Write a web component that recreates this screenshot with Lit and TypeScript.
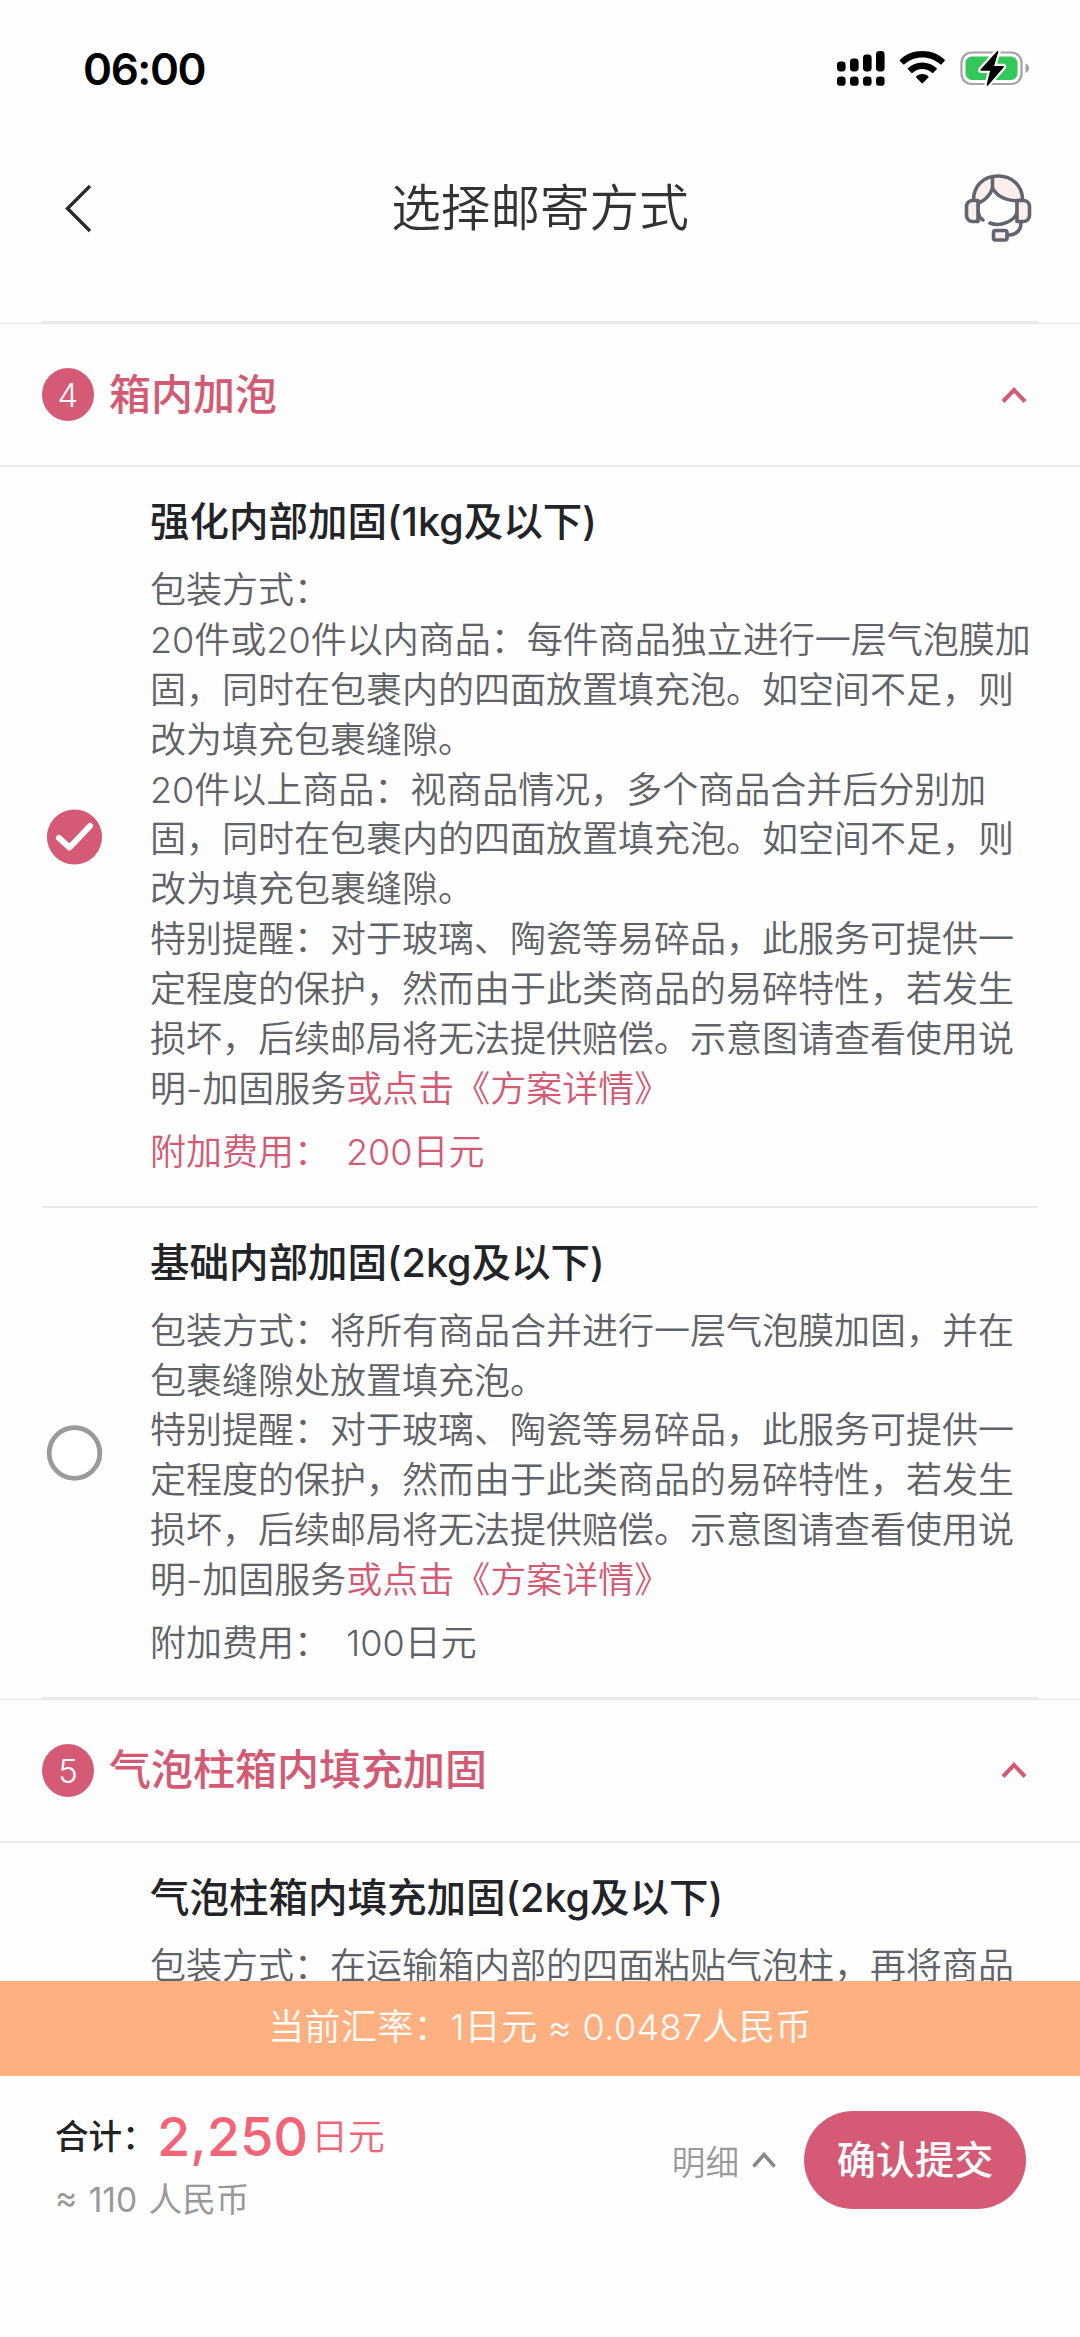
import { LitElement, html, css, svg, nothing } from "lit";
import { customElement, property, state } from "lit/decorators.js";

interface Option {
  id: string;
  title: string;
  lines: string[];
  link?: string;
  fee?: string;
}

interface Section {
  step: number;
  title: string;
  options: Option[];
}

const NOTICE = [
  "特别提醒：对于玻璃、陶瓷等易碎品，此服务可提供一",
  "定程度的保护，然而由于此类商品的易碎特性，若发生",
  "损坏，后续邮局将无法提供赔偿。示意图请查看使用说",
  "明-加固服务",
];

const SECTIONS: Section[] = [
  {
    step: 4,
    title: "箱内加泡",
    options: [
      {
        id: "strong",
        title: "强化内部加固(1kg及以下)",
        lines: [
          "包装方式：",
          "20件或20件以内商品：每件商品独立进行一层气泡膜加",
          "固，同时在包裹内的四面放置填充泡。如空间不足，则",
          "改为填充包裹缝隙。",
          "20件以上商品：视商品情况，多个商品合并后分别加",
          "固，同时在包裹内的四面放置填充泡。如空间不足，则",
          "改为填充包裹缝隙。",
          ...NOTICE,
        ],
        link: "或点击《方案详情》",
        fee: "200日元",
      },
      {
        id: "basic",
        title: "基础内部加固(2kg及以下)",
        lines: [
          "包装方式：将所有商品合并进行一层气泡膜加固，并在",
          "包裹缝隙处放置填充泡。",
          ...NOTICE,
        ],
        link: "或点击《方案详情》",
        fee: "100日元",
      },
    ],
  },
  {
    step: 5,
    title: "气泡柱箱内填充加固",
    options: [
      {
        id: "column",
        title: "气泡柱箱内填充加固(2kg及以下)",
        lines: ["包装方式：在运输箱内部的四面粘贴气泡柱，再将商品"],
      },
    ],
  },
];

@customElement("status-bar")
export class StatusBar extends LitElement {
  static styles = css`
    :host {
      display: flex;
      align-items: center;
      justify-content: space-between;
      height: 102px;
      padding: 36px 49px 0 83px;
      box-sizing: border-box;
    }
    .time {
      font-size: 44px;
      line-height: 66px;
      font-weight: 600;
      letter-spacing: -1.400px;
      color: #000;
    }
    .icons {
      display: block;
    }
  `;

  render() {
    const bars = [
      { x: 0, top: 10.5 },
      { x: 13, top: 7.5 },
      { x: 26, top: 3.5 },
      { x: 39, top: 0 },
    ];
    return html`
      <span class="time">06:00</span>
      <svg class="icons" width="194" height="36" viewBox="0 0 194 36">
        ${bars.map(
          (b) => svg`
            <rect x=${b.x} y=${b.top} width="8.6" height=${20.5 - b.top} rx="3.4" />
            <rect x=${b.x} y="25.5" width="8.6" height="9.3" rx="3.4" />`
        )}
        <path
          d="M85.3 0C94.2 0 102 3.4 107.6 8.7a1 1 0 0 1 0 1.4l-3.1 3.1a1 1 0 0 1-1.4 0C98.400 8.900 92.200 6.400 85.300 6.400S72.200 8.900 67.500 13.200a1 1 0 0 1-1.4 0L63 10.100a1 1 0 0 1 0-1.400C68.600 3.400 76.400 0 85.300 0Z"
        />
        <path
          d="M85.3 11.600c5.600 0 10.500 2.100 14.200 5.500a1 1 0 0 1 0 1.500l-3.200 3.200a1 1 0 0 1-1.400 0c-2.500-2.300-5.800-3.700-9.600-3.700s-7.100 1.400-9.600 3.700a1 1 0 0 1-1.400 0l-3.200-3.200a1 1 0 0 1 0-1.500c3.700-3.400 8.600-5.500 14.200-5.500Z"
        />
        <path
          d="M85.300 23c2.300 0 4.400.9 5.900 2.300a1 1 0 0 1 0 1.500l-5.200 5.300a1 1 0 0 1-1.400 0l-5.200-5.300a1 1 0 0 1 0-1.500c1.500-1.400 3.600-2.300 5.900-2.300Z"
        />
        <rect x="124.500" y="1.500" width="60" height="31.500" rx="10" fill="none" stroke="#a3a3a3" stroke-width="2.200" />
        <rect x="128.500" y="5.500" width="52" height="23.500" rx="6.500" fill="#34c759" />
        <path d="M188.500 12.500c2.300.8 3.600 2.600 3.600 4.700s-1.300 3.900-3.600 4.700Z" fill="#a3a3a3" />
        <path
          d="M160 .3 143.500 18.500a.8.800 0 0 0 .6 1.300h9L149.600 33.700c-.2.900.8 1.400 1.400.7L166.800 16.300a.8.800 0 0 0-.6-1.300h-9.100L161.300 1c.2-.8-.700-1.300-1.300-.7Z"
          fill="#000" stroke="#fff" stroke-width="4.500" paint-order="stroke" stroke-linejoin="round"
        />
      </svg>
    `;
  }
}

@customElement("nav-header")
export class NavHeader extends LitElement {
  static styles = css`
    :host {
      display: grid;
      grid-template-columns: 140px 1fr 140px;
      align-items: center;
      height: 212px;
    }
    .back {
      display: block;
      margin-left: 62px;
    }
    .title {
      text-align: center;
      font-size: 49.600px;
      line-height: 70px;
      font-weight: var(--light);
      color: #333;
    }
    .service {
      display: block;
      margin-left: 22px;
    }
  `;

  render() {
    return html`
      <svg class="back" width="32" height="52" viewBox="0 0 32 52">
        <path d="M28 4 5.500 26.500 28 49" fill="none" stroke="#2a2a2a" stroke-width="3.400" />
      </svg>
      <span class="title">选择邮寄方式</span>
      <svg class="service" width="70" height="70" viewBox="21.500 23 70 70">
        <g fill="#feeeec" stroke="#62656f" stroke-width="3.600" stroke-linecap="round" stroke-linejoin="round">
          <path d="M33 50C33 36 43 26 57.500 26S82 36 82 50C70 52.500 57 48 52 38C50 45 44 51 38 53" />
          <path d="M52 27V38" />
          <path d="M37.500 53V61C38 66 39.500 68.500 42.500 70M77 52V61C75 71 60 77.500 49.500 73" fill="none" />
          <path d="M37.500 50.500V71.500H32A6 6 0 0 1 26 65.500V56.500A6 6 0 0 1 32 50.500Z" />
          <path d="M76.500 50.500V71.500H83A6 6 0 0 0 89 65.500V56.500A6 6 0 0 0 83 50.500Z" />
          <path d="M80.500 72.500C80.500 81 76 85 66.500 85" fill="none" />
          <rect x="53" y="80.500" width="13.500" height="9.500" rx="2" />
        </g>
      </svg>
    `;
  }
}

@customElement("shipping-option")
export class ShippingOption extends LitElement {
  @property({ attribute: false }) option!: Option;
  @property({ type: Boolean }) checked = false;

  static styles = css`
    :host {
      display: grid;
      grid-template-columns: 108px 1fr;
      align-items: center;
      margin: 0 42px;
      padding: 30px 0 29px;
    }
    .mark {
      display: block;
      margin-left: 4px;
    }
    .title {
      font-size: 39.500px;
      line-height: 50px;
      font-weight: 500;
      color: #222427;
      white-space: nowrap;
    }
    .desc {
      margin-top: 19px;
      font-size: 36px;
      line-height: 49.870px;
      font-weight: var(--light);
      color: #606267;
      white-space: nowrap;
    }
    .link,
    .fee.on {
      color: #d35a74;
    }
    .fee {
      display: flex;
      gap: 16px;
      margin-top: 12px;
      font-size: 36px;
      line-height: 50px;
      font-weight: var(--light);
      color: #606267;
    }
    .fee.on {
      color: #d35a74;
    }
  `;

  render() {
    const o = this.option;
    return html`
      ${o.fee
        ? html`<svg class="mark" width="58" height="58" viewBox="0 0 58 58">
            ${this.checked
              ? svg`<circle cx="28.500" cy="29" r="27.600" fill="#d55a75" />
                  <path d="M13 30 23.500 39.500 44 18" fill="none" stroke="#fff" stroke-width="6" stroke-linecap="round" stroke-linejoin="round" />`
              : svg`<circle cx="28.500" cy="29" r="25.300" fill="#fff" stroke="#9a9a9a" stroke-width="4.800" />`}
          </svg>`
        : html`<span></span>`}
      <div>
        <div class="title">${o.title}</div>
        <div class="desc">
          ${o.lines.map(
            (line, i) =>
              html`${i ? html`<br />` : nothing}${line}`
          )}${o.link ? html`<span class="link">${o.link}</span>` : nothing}
        </div>
        ${o.fee
          ? html`<div class="fee ${this.checked ? "on" : ""}"><span>附加费用：</span><span>${o.fee}</span></div>`
          : nothing}
      </div>
    `;
  }
}

@customElement("option-section")
export class OptionSection extends LitElement {
  @property({ attribute: false }) section!: Section;
  @property() selected = "";

  static styles = css`
    :host {
      display: block;
    }
    .head {
      display: flex;
      align-items: center;
      height: 144px;
      padding: 0 52px 0 42px;
      box-sizing: border-box;
      border-top: 1px solid #e6e6e6;
      border-bottom: 2px solid #ececec;
    }
    .step {
      width: 52px;
      height: 53px;
      border-radius: 50%;
      background: #d55a75;
      color: #fff;
      font-size: 33px;
      line-height: 54px;
      font-weight: 300;
      text-align: center;
    }
    .title {
      flex: 1;
      margin-left: 15px;
      font-size: 42px;
      line-height: 60px;
      font-weight: 500;
      color: #d35a74;
    }
    .rule {
      height: 2px;
      margin: 0 42px;
      background: #e9e9e9;
    }
  `;

  render() {
    const s = this.section;
    return html`
      <div class="head">
        <span class="step">${s.step}</span>
        <span class="title">${s.title}</span>
        <svg width="28" height="18" viewBox="0 0 28 18">
          <path d="M3 15.500 14 4 25 15.500" fill="none" stroke="#d35a74" stroke-width="4" />
        </svg>
      </div>
      ${s.options.map(
        (o) => html`
          <shipping-option .option=${o} .checked=${o.id === this.selected}></shipping-option>
          <div class="rule"></div>
        `
      )}
    `;
  }
}

@customElement("checkout-footer")
export class CheckoutFooter extends LitElement {
  static styles = css`
    :host {
      display: block;
      height: 356px;
    }
    .rate {
      height: 95px;
      background: #ffb080;
      color: #fff;
      text-align: center;
      font-size: 36px;
      letter-spacing: 0.400px;
      line-height: 93px;
      font-weight: var(--light);
    }
    .bar {
      display: flex;
      align-items: flex-start;
      padding: 25px 54px 0 55px;
    }
    .sums {
      flex: 1;
    }
    .total {
      display: flex;
      align-items: center;
      height: 71px;
      line-height: 71px;
      color: #f0647a;
    }
    .label {
      font-size: 33.600px;
      font-weight: 500;
      color: #222;
      width: 102px;
    }
    .amount {
      font-size: 54px;
      font-weight: 500;
      color: #f56376;
    }
    .unit {
      margin-left: 3px;
      font-size: 36.800px;
      font-weight: var(--light);
    }
    .approx {
      line-height: 56px;
      font-size: 33.600px;
      color: #999;
      white-space: pre;
      word-spacing: 2px;
    }
    .detail {
      display: flex;
      align-items: center;
      gap: 12px;
      height: 118px;
      font-size: 33.600px;
      color: #999;
      font-weight: var(--light);
    }
    .submit {
      width: 222px;
      height: 98px;
      margin: 10px 0 0 27px;
      border: 0;
      border-radius: 49px;
      background: #d55a75;
      color: #fff;
      font: inherit;
      font-size: 39.200px;
      line-height: 98px;
      font-weight: 500;
      text-align: center;
      padding: 0;
    }
  `;

  render() {
    return html`
      <div class="rate">当前汇率：1日元 ≈ 0.0487人民币</div>
      <div class="bar">
        <div class="sums">
          <div class="total">
            <span class="label">合计：</span><span class="amount">2,250</span><span class="unit">日元</span>
          </div>
          <div class="approx">≈ 110 人民币</div>
        </div>
        <div class="detail">
          <span>明细</span>
          <svg width="26" height="20" viewBox="0 0 26 20">
            <path d="M2.500 16.500 13 4.500 23.500 16.500" fill="none" stroke="#888" stroke-width="3.500" />
          </svg>
        </div>
        <button class="submit">确认提交</button>
      </div>
    `;
  }
}

@customElement("app-root")
export class AppRoot extends LitElement {
  @state() private selected = "strong";

  static styles = css`
    :host {
      --light: 350;
      display: flex;
      flex-direction: column;
      width: 1080px;
      height: 2337px;
      background: #fefefe;
      font-family: Inter, "Noto Sans CJK SC", sans-serif;
      overflow: hidden;
    }
    .list {
      flex: 1;
      min-height: 0;
      padding-top: 7px;
      overflow: hidden;
    }
    .edge {
      height: 2px;
      margin: 0 42px;
      background: #e9e9e9;
    }
  `;

  render() {
    return html`
      <status-bar></status-bar>
      <nav-header></nav-header>
      <div class="list">
        <div class="edge"></div>
        ${SECTIONS.map(
          (s) => html`<option-section .section=${s} .selected=${this.selected}></option-section>`
        )}
      </div>
      <checkout-footer></checkout-footer>
    `;
  }
}
